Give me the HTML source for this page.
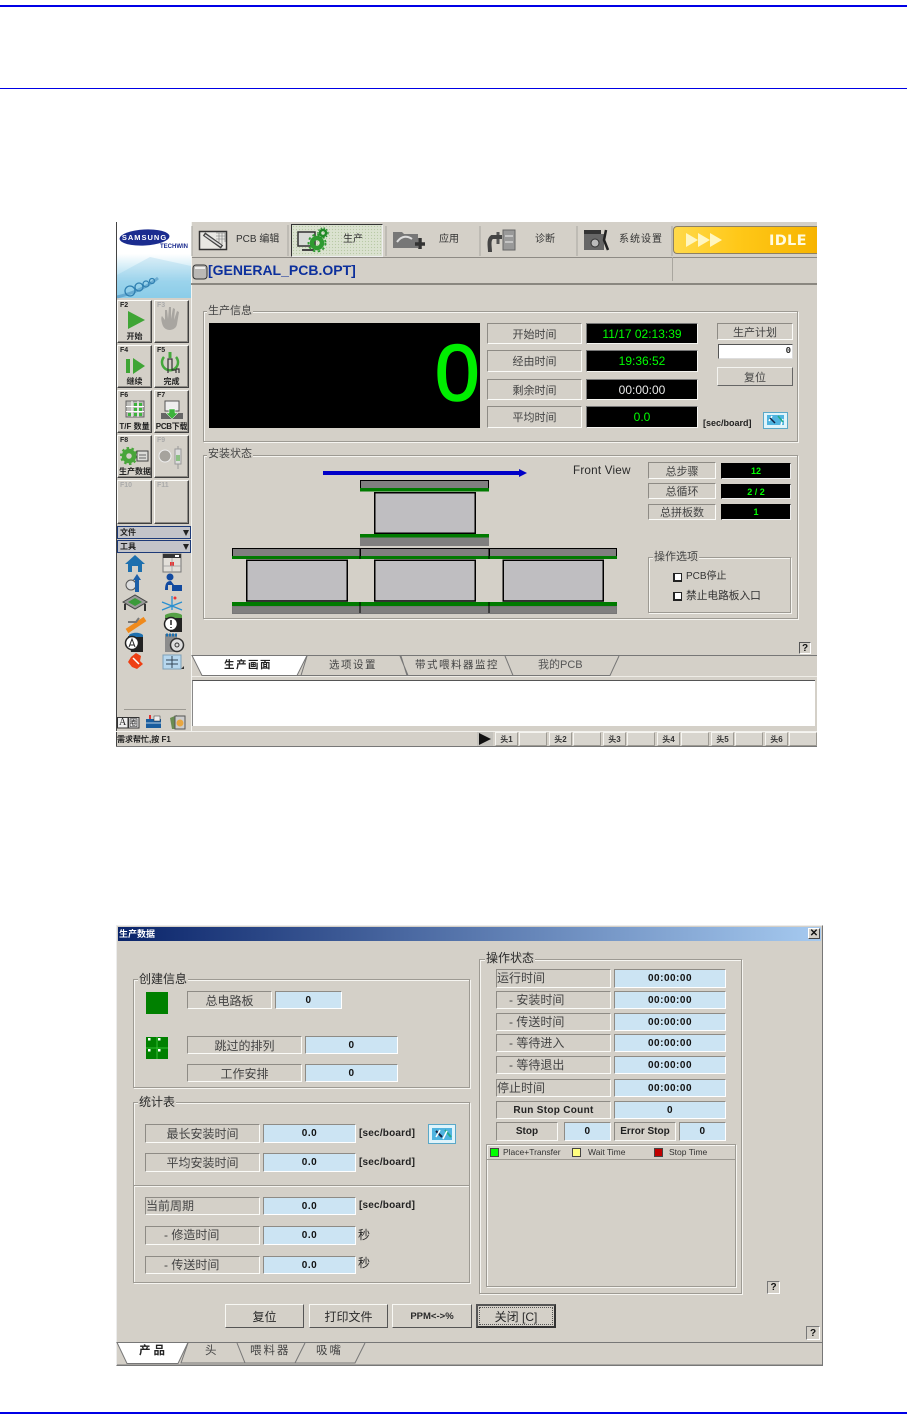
<!DOCTYPE html>
<html lang="zh"><head><meta charset="utf-8"><title>生产数据</title>
<style>
html,body{margin:0;padding:0;background:#fff}
body{position:relative;width:907px;height:1424px;overflow:hidden;font-family:"Liberation Sans","Noto Sans CJK SC",sans-serif;color:#2a2a2a}
div,span{position:absolute;box-sizing:border-box;white-space:nowrap}
.c{display:flex;align-items:center;justify-content:center}
.l{border:1px solid;border-color:#8e8b85 #fbfbf8 #fbfbf8 #8e8b85;font-size:11px;color:#444}
.d{font-size:12px}
.k{background:#000;border:1px solid;border-color:#777 #f4f4f0 #f4f4f0 #777;color:#0f0;font-size:12px}
.v{background:#cce4f3;border:1px solid;border-color:#8e8b85 #fff #fff #8e8b85;font:bold 10px "Liberation Sans",sans-serif;letter-spacing:.5px;color:#111}
.g{border:1px solid #9d9a93;box-shadow:inset 1px 1px 0 #f6f5f1,1px 1px 0 #f6f5f1}
.t{background:#d4d0c8;padding:0 1px;line-height:14px}
.b{background:#d4d0c8;border:1px solid;border-color:#fbfbf8 #3f3f3f #3f3f3f #fbfbf8;box-shadow:inset -1px -1px 0 #8e8b85}
.f{font:bold 7px "Liberation Sans",sans-serif;color:#222}
.n{font-weight:bold;font-size:8px;color:#222;text-align:center;line-height:9px}
.q{background:#d4d0c8;border:1px solid;border-color:#fff #555 #555 #fff;font:bold 10px "Liberation Sans",sans-serif;color:#111}
.s{background:#d8d5ce;border:1px solid;border-color:#f6f5f1 #9d9a93 #9d9a93 #f6f5f1;font-size:8px;font-weight:bold;color:#333}
.m{font-size:10px;color:#333}
.w{font:bold 9px "Liberation Sans",sans-serif;color:#222}
</style></head><body>
<div style="left:0;top:5px;width:907px;height:2px;background:#0000e6"></div>
<div style="left:0;top:88px;width:907px;height:1px;background:#0000e6"></div>
<div style="left:0;top:1412px;width:907px;height:2px;background:#0000e6"></div>

<!-- SCREEN 1 -->
<div style="left:116px;top:222px;width:701px;height:525px;background:#d4d0c8"></div>
<div style="left:116px;top:222px;width:1px;height:525px;background:#444"></div>
<div style="left:117px;top:222px;width:74px;height:76px;background:linear-gradient(180deg,#fff 0,#fff 42%,#d8eff8 58%,#a5d9ef 78%,#8fd0ea 100%)"></div>
<div style="left:191px;top:222px;width:1px;height:509px;background:#f4f4f0"></div>
<div style="left:192px;top:257px;width:625px;height:1px;background:#8e8b85"></div>
<div style="left:191px;top:283px;width:626px;height:2px;background:#8a8780"></div>
<div style="left:672px;top:257px;width:1px;height:24px;background:#a9a69f"></div>
<div style="left:291px;top:224px;width:92px;height:33px;border:1px solid;border-color:#333 #eee #eee #333;background-color:#dbe2d0;background-image:radial-gradient(#b9c9a6 0.7px,transparent 0.8px);background-size:3px 3px"></div>
<div style="left:673px;top:226px;width:144px;height:28px;border:1px solid #8c8064;border-right:0;border-radius:4px 0 0 4px;background:linear-gradient(90deg,#ffd94a,#ffc818 45%,#f7b400)"></div>

<div class="g" style="left:203px;top:311px;width:595px;height:131px"></div>
<div class="g" style="left:203px;top:455px;width:595px;height:164px"></div>
<div class="g" style="left:648px;top:557px;width:143px;height:56px"></div>
<div style="left:209px;top:323px;width:271px;height:105px;background:#000"></div>
<div style="left:192px;top:680px;width:623px;height:46px;background:#fff;border-top:1px solid #555;border-left:1px solid #888"></div>
<div style="left:116px;top:731px;width:701px;height:1px;background:#f2f1ed"></div>
<div style="left:116px;top:746px;width:701px;height:1px;background:#777"></div>
<div style="left:124px;top:709px;width:62px;height:1px;background:#9d9a93"></div>

<!-- sidebar buttons -->
<div class="b" style="left:117px;top:300px;width:35px;height:43px"></div>
<div class="b" style="left:154px;top:300px;width:35px;height:43px"></div>
<div class="b" style="left:117px;top:345px;width:35px;height:43px"></div>
<div class="b" style="left:154px;top:345px;width:35px;height:43px"></div>
<div class="b" style="left:117px;top:390px;width:35px;height:43px"></div>
<div class="b" style="left:154px;top:390px;width:35px;height:43px"></div>
<div class="b" style="left:117px;top:435px;width:35px;height:43px"></div>
<div class="b" style="left:154px;top:435px;width:35px;height:43px"></div>
<div class="b" style="left:117px;top:480px;width:35px;height:44px"></div>
<div class="b" style="left:154px;top:480px;width:35px;height:44px"></div>
<div style="left:117px;top:526px;width:74px;height:13px;background:#c3c4c9;border:1px solid #1d3a78"></div>
<div style="left:117px;top:540px;width:74px;height:13px;background:#c3c4c9;border:1px solid #1d3a78"></div>

<!-- Labels -->
<div class="l c" style="left:487px;top:323px;width:95px;height:21px">开始时间</div>
<div class="l c" style="left:487px;top:350px;width:95px;height:22px">经由时间</div>
<div class="l c" style="left:487px;top:379px;width:95px;height:21px">剩余时间</div>
<div class="l c" style="left:487px;top:406px;width:95px;height:22px">平均时间</div>
<div class="k c" style="left:586px;top:323px;width:112px;height:21px">11/17 02:13:39</div>
<div class="k c" style="left:586px;top:350px;width:112px;height:22px">19:36:52</div>
<div class="k c" style="left:586px;top:379px;width:112px;height:21px;color:#e8e8e8">00:00:00</div>
<div class="k c" style="left:586px;top:406px;width:112px;height:22px">0.0</div>
<div class="l c" style="left:717px;top:323px;width:76px;height:17px">生产计划</div>
<div style="left:718px;top:344px;width:75px;height:15px;background:#fff;border:1px solid;border-color:#555 #ddd #ddd #555;font:bold 9px 'Liberation Mono',monospace;text-align:right;line-height:13px;padding-right:1px">0</div>
<div class="b c" style="left:717px;top:367px;width:76px;height:19px;font-size:11px;color:#444;box-shadow:none;border-color:#f4f4f0 #666 #666 #f4f4f0">复位</div>
<div class="w" style="left:703px;top:418px">[sec/board]</div>
<div style="left:573px;top:464px;font-size:11.700px;line-height:14px;color:#2a2a2a;letter-spacing:.2px">Front View</div>
<div class="l c" style="left:648px;top:462px;width:68px;height:17px">总步骤</div>
<div class="l c" style="left:648px;top:483px;width:68px;height:16px">总循环</div>
<div class="l c" style="left:648px;top:504px;width:68px;height:16px">总拼板数</div>
<div class="k c" style="left:721px;top:463px;width:70px;height:16px;font-size:9px;font-weight:bold;border-color:#000 #eee #eee #000">12</div>
<div class="k c" style="left:721px;top:484px;width:70px;height:15px;font-size:9px;font-weight:bold;border-color:#000 #eee #eee #000">2 / 2</div>
<div class="k c" style="left:721px;top:504px;width:70px;height:16px;font-size:9px;font-weight:bold;border-color:#000 #eee #eee #000">1</div>
<div class="t" style="left:207px;top:304px;font-size:11px;color:#444">生产信息</div>
<div class="t" style="left:207px;top:447px;font-size:11px;color:#444">安装状态</div>
<div class="t" style="left:653px;top:550px;font-size:11px;color:#444">操作选项</div>
<div style="left:673px;top:573px;width:9px;height:9px;background:#fff;border:1px solid #222;border-width:1px 1px 2px 2px"></div>
<div style="left:673px;top:592px;width:9px;height:9px;background:#fff;border:1px solid #222;border-width:1px 1px 2px 2px"></div>
<div style="left:686px;top:570px;font-size:10px;line-height:14px;color:#333">PCB停止</div>
<div style="left:686px;top:589px;font-size:10.700px;line-height:14px;color:#333">禁止电路板入口</div>
<div class="q c" style="left:799px;top:642px;width:12px;height:12px;border-color:#555 #fff #fff #555">?</div>

<!-- Dialog -->
<div style="left:116px;top:925px;width:707px;height:441px;background:#d4d0c8;border:1px solid;border-color:#ececec #777 #777 #ececec"></div>
<div style="left:118px;top:927px;width:703px;height:14px;background:linear-gradient(90deg,#0a246a,#a6caf0)"></div>
<div class="q c" style="left:808px;top:928px;width:12px;height:11px;font-size:10px;border-color:#fff #444 #444 #fff">✕</div>
<div style="left:119px;top:927px;font-size:9px;font-weight:bold;line-height:14px;color:#fff">生产数据</div>
<div class="g" style="left:133px;top:979px;width:337px;height:109px"></div>
<div class="g" style="left:133px;top:1102px;width:337px;height:181px"></div>
<div style="left:134px;top:1185px;width:335px;height:1px;background:#9d9a93;box-shadow:0 1px 0 #f6f5f1"></div>
<div class="g" style="left:479px;top:959px;width:263px;height:335px"></div>
<div class="g" style="left:486px;top:1144px;width:250px;height:143px"></div>
<div style="left:487px;top:1159px;width:248px;height:1px;background:#9d9a93"></div>
<div class="t d" style="left:138px;top:972px">创建信息</div>
<div class="t d" style="left:138px;top:1095px">统计表</div>
<div class="t d" style="left:485px;top:951px">操作状态</div>
<div style="left:146px;top:992px;width:22px;height:22px;background:#008000"></div>
<div style="left:146px;top:1037px;width:22px;height:22px;background:#008000"></div>

<div class="l d c" style="left:187px;top:991px;width:85px;height:18px">总电路板</div>
<div class="v c" style="left:275px;top:991px;width:67px;height:18px">0</div>
<div class="l d c" style="left:187px;top:1036px;width:115px;height:18px">跳过的排列</div>
<div class="v c" style="left:305px;top:1036px;width:93px;height:18px">0</div>
<div class="l d c" style="left:187px;top:1064px;width:115px;height:18px">工作安排</div>
<div class="v c" style="left:305px;top:1064px;width:93px;height:18px">0</div>

<div class="l d c" style="left:145px;top:1124px;width:115px;height:19px">最长安装时间</div>
<div class="v c" style="left:263px;top:1124px;width:93px;height:19px">0.0</div>
<div class="l d c" style="left:145px;top:1153px;width:115px;height:19px">平均安装时间</div>
<div class="v c" style="left:263px;top:1153px;width:93px;height:19px">0.0</div>
<div class="l d" style="left:145px;top:1197px;width:115px;height:18px;line-height:16px">当前周期</div>
<div class="v c" style="left:263px;top:1197px;width:93px;height:18px">0.0</div>
<div class="l d" style="left:145px;top:1226px;width:115px;height:19px;line-height:17px;padding-left:18px">- 修造时间</div>
<div class="v c" style="left:263px;top:1226px;width:93px;height:19px">0.0</div>
<div class="l d" style="left:145px;top:1256px;width:115px;height:18px;line-height:16px;padding-left:18px">- 传送时间</div>
<div class="v c" style="left:263px;top:1256px;width:93px;height:18px">0.0</div>
<div class="w" style="left:359px;top:1128px;font-size:10px;letter-spacing:.2px">[sec/board]</div>
<div class="w" style="left:359px;top:1157px;font-size:10px;letter-spacing:.2px">[sec/board]</div>
<div class="w" style="left:359px;top:1200px;font-size:10px;letter-spacing:.2px">[sec/board]</div>
<div class="d" style="left:358px;top:1228px;line-height:14px">秒</div>
<div class="d" style="left:358px;top:1256px;line-height:14px">秒</div>

<div class="l d" style="left:496px;top:969px;width:115px;height:19px;line-height:17px">运行时间</div>
<div class="v c" style="left:614px;top:969px;width:112px;height:19px">00:00:00</div>
<div class="l d" style="left:496px;top:991px;width:115px;height:18px;line-height:16px;padding-left:12px">- 安装时间</div>
<div class="v c" style="left:614px;top:991px;width:112px;height:18px">00:00:00</div>
<div class="l d" style="left:496px;top:1013px;width:115px;height:18px;line-height:16px;padding-left:12px">- 传送时间</div>
<div class="v c" style="left:614px;top:1013px;width:112px;height:18px">00:00:00</div>
<div class="l d" style="left:496px;top:1034px;width:115px;height:18px;line-height:16px;padding-left:12px">- 等待进入</div>
<div class="v c" style="left:614px;top:1034px;width:112px;height:18px">00:00:00</div>
<div class="l d" style="left:496px;top:1056px;width:115px;height:18px;line-height:16px;padding-left:12px">- 等待退出</div>
<div class="v c" style="left:614px;top:1056px;width:112px;height:18px">00:00:00</div>
<div class="l d" style="left:496px;top:1079px;width:115px;height:18px;line-height:16px">停止时间</div>
<div class="v c" style="left:614px;top:1079px;width:112px;height:18px">00:00:00</div>
<div class="l c" style="left:496px;top:1101px;width:115px;height:18px;font:bold 10px 'Liberation Sans',sans-serif;letter-spacing:.3px;color:#222">Run Stop Count</div>
<div class="v c" style="left:614px;top:1101px;width:112px;height:18px">0</div>
<div class="l c" style="left:496px;top:1122px;width:62px;height:19px;font:bold 10px 'Liberation Sans',sans-serif;color:#222">Stop</div>
<div class="v c" style="left:564px;top:1122px;width:47px;height:19px">0</div>
<div class="l c" style="left:614px;top:1122px;width:62px;height:19px;font:bold 10px 'Liberation Sans',sans-serif;color:#222">Error Stop</div>
<div class="v c" style="left:679px;top:1122px;width:47px;height:19px">0</div>

<div style="left:490px;top:1148px;width:9px;height:9px;background:#0f0;border:1px solid #444"></div>
<div style="left:572px;top:1148px;width:9px;height:9px;background:#ffff80;border:1px solid #444"></div>
<div style="left:654px;top:1148px;width:9px;height:9px;background:#c00000;border:1px solid #444"></div>
<div style="left:503px;top:1147px;font-size:8.500px;line-height:11px;color:#333">Place+Transfer</div>
<div style="left:588px;top:1147px;font-size:8.500px;line-height:11px;color:#333">Wait Time</div>
<div style="left:669px;top:1147px;font-size:8.500px;line-height:11px;color:#333">Stop Time</div>

<div class="b c d" style="left:225px;top:1304px;width:79px;height:24px;box-shadow:none;border-color:#f8f8f4 #555 #555 #f8f8f4">复位</div>
<div class="b c d" style="left:309px;top:1304px;width:79px;height:24px;box-shadow:none;border-color:#f8f8f4 #555 #555 #f8f8f4">打印文件</div>
<div class="b c" style="left:392px;top:1304px;width:80px;height:24px;font:bold 9.500px 'Liberation Sans',sans-serif;box-shadow:none;border-color:#f8f8f4 #555 #555 #f8f8f4">PPM&lt;-&gt;%</div>
<div class="b c d" style="left:476px;top:1304px;width:80px;height:24px;border:2px solid;border-color:#555 #333 #333 #555;box-shadow:none">关闭 [C]<div style="left:1px;top:1px;right:1px;bottom:1px;border:1px dotted #555"></div></div>
<div class="q c" style="left:767px;top:1281px;width:13px;height:13px;border-color:#777 #fff #fff #777">?</div>
<div class="q c" style="left:806px;top:1326px;width:14px;height:14px;border-color:#777 #fff #fff #777">?</div>

<!-- SVG shapes: page coordinates -->
<svg style="position:absolute;left:0;top:0" width="907" height="1424" viewBox="0 0 907 1424" fill="none">
<!-- logo art -->
<path d="M117 275L150 257L191 266V298H117Z" fill="#7ec4e4" opacity=".25"/>
<path d="M117 297C130 294 146 288 158 278" stroke="#3b85b8" stroke-width="3" opacity=".5"/>
<circle cx="152" cy="281" r="2.500" stroke="#2f7fb0" stroke-width="1.200"/><circle cx="146" cy="284" r="3" stroke="#2f7fb0" stroke-width="1.200"/><circle cx="139" cy="287" r="4" stroke="#2f7fb0" stroke-width="1.300"/><circle cx="130" cy="291" r="5" stroke="#2f7fb0" stroke-width="1.300"/>
<ellipse cx="144.500" cy="237.500" rx="25" ry="8" fill="#1b2c8f" transform="rotate(-3 144.500 237.500)"/>
<!-- separators -->
<path d="M192 226V256M288 225V256M386 226V256M480 226V256M577 226V256M672 226V256" stroke="#a9a69f"/>
<!-- pcb icon -->
<rect x="199.500" y="231.500" width="27" height="18" fill="#e9e8e4" stroke="#333" stroke-width="1.500"/>
<path d="M216 233H225V242M219 233V244M222 233V244M216 236H225M216 239H225" stroke="#777" stroke-width=".6"/>
<path d="M204 234L222 247" stroke="#444" stroke-width="4"/><path d="M205 235L221 246" stroke="#ddd" stroke-width="1.500"/>
<!-- production icon -->
<rect x="298" y="232" width="17" height="14" fill="#d8dbd6" stroke="#333" stroke-width="1.500"/><path d="M302 250H314" stroke="#444" stroke-width="2"/>
<circle cx="317" cy="243" r="5" stroke="#2e9a30" stroke-width="4.500"/><circle cx="317" cy="243" r="8.500" stroke="#2e9a30" stroke-width="1.800" stroke-dasharray="2.500 2.500"/>
<circle cx="323" cy="233" r="3" stroke="#1f8a26" stroke-width="2.500"/><circle cx="323" cy="233" r="5" stroke="#1f8a26" stroke-width="1.200" stroke-dasharray="1.500 1.500"/>
<!-- apply icon -->
<path d="M393 232H402L404 234H418V248H393Z" fill="#777"/><path d="M397 242C402 235 408 236 412 239" stroke="#ddd" stroke-width="2"/>
<path d="M420 238V249M415 244H425" stroke="#333" stroke-width="3.500"/>
<!-- diag icon -->
<rect x="503" y="230" width="12" height="20" fill="#999" stroke="#666"/><path d="M505 236H513M505 242H513" stroke="#eee"/>
<path d="M498 232V244" stroke="#555" stroke-width="3"/><path d="M502 237H492C488 240 490 247 490 252" stroke="#444" stroke-width="4"/>
<!-- system icon -->
<rect x="584" y="234" width="20" height="16" fill="#666"/><rect x="584" y="230" width="17" height="4" fill="#333"/><circle cx="595" cy="243" r="4" fill="#bbb" stroke="#333"/><path d="M606 230L604 240L608 250" stroke="#222" stroke-width="2.500"/>
<!-- status arrows -->
<path d="M686 233L698 240L686 247ZM698 233L710 240L698 247ZM710 233L722 240L710 247Z" fill="#fff6c0"/>
<!-- title chip -->
<rect x="193" y="265" width="14" height="14" rx="3" fill="#bab8b5" stroke="#333"/><path d="M195 268H205" stroke="#eeeeec" stroke-width="2"/>
<!-- sidebar -->
<path d="M128 311L145 320L128 329Z" fill="#3fa535"/>
<path d="M163 326C160 318 162 316 162 316L165 320L165 310L167 310L168 319L169 307L171 307L171 319L173 308L175 309L174 320L177 311L179 312L177 324C176 331 166 332 163 326Z" fill="#a8a5a0"/>
<path d="M126 359H130V373H126ZM133 358L145 366L133 374Z" fill="#3fa535"/>
<path d="M164 357A8 8 0 1 0 176 357" stroke="#45a83c" stroke-width="2.500"/>
<path d="M170 352V358" stroke="#45a83c" stroke-width="3"/>
<path d="M168 373V359H172V370H176V373M176 369H179V373" stroke="#333" stroke-width="1.200"/>
<rect x="126" y="401" width="18" height="16" fill="#bcbcb8" stroke="#666"/><path d="M132 401V417M138 401V417M126 406.500H144M126 411.500H144" stroke="#fff"/><path d="M134 403H137V406H134ZM139 403H142V406H139ZM134 408H137V411H134ZM139 408H142V411H139ZM128 413H131V416H128ZM134 413H137V416H134ZM139 413H142V416H139Z" fill="#3cb43c"/>
<rect x="165" y="401" width="14" height="10" fill="#eee" stroke="#555"/>
<path d="M161 419V413H183V419Z" fill="#666"/><path d="M169 409H175V413H178L172 419L166 413H169Z" fill="#3cb43c" stroke="#fff" stroke-width=".5"/>
<circle cx="129" cy="456" r="5" stroke="#48a53a" stroke-width="4.500"/><circle cx="129" cy="456" r="8" stroke="#48a53a" stroke-width="2" stroke-dasharray="2.500 2.500"/>
<rect x="137" y="451" width="11" height="10" fill="#dcdcd8" stroke="#444"/><path d="M139 455H146M139 458H146" stroke="#666"/>
<circle cx="165" cy="456" r="6" fill="#a6a39d" stroke="#eee"/><rect x="175" y="449" width="6" height="15" fill="#ddd" stroke="#999"/><rect x="176" y="455" width="4" height="6" fill="#8cc084"/><path d="M178 446V449M178 464V469" stroke="#999"/>
<path d="M183 530H189L186 536Z" fill="#222"/>
<path d="M183 544H189L186 550Z" fill="#222"/>
<!-- small tool icons -->
<path d="M135 555L145 564H142V572H138V566H132V572H128V564H125Z" fill="#1d6fae"/>
<rect x="163" y="554" width="18" height="18" fill="#e2dfd9" stroke="#777"/><rect x="163" y="554" width="18" height="4" fill="#333"/><rect x="175" y="555" width="4" height="2" fill="#fff"/><rect x="170" y="562" width="4" height="4" fill="#e33"/><path d="M163 566H181M172 558V572" stroke="#999" stroke-width=".7"/>
<circle cx="131" cy="585" r="5" fill="#ddd" stroke="#555"/><path d="M137 574L141 580H139V592H135V580H133Z" fill="#1d5fa8"/>
<circle cx="170" cy="577" r="3.500" fill="#124aa0"/><path d="M165 590C165 583 167 581 171 581L174 585H168V590ZM172 585H182V591H172Z" fill="#124aa0"/>
<path d="M123 602L135 595L147 602L135 609Z" fill="#999" stroke="#444"/><path d="M128 602L135 598L142 602L135 606Z" fill="#3a9a3a"/><path d="M125 604V610M145 604V611" stroke="#333" stroke-width="2"/>
<path d="M172 596V610M162 610L182 602M162 602L182 610" stroke="#2a8fd0" stroke-width="1.300"/><circle cx="175" cy="598" r="1.500" fill="#e33"/>
<path d="M127 631L145 619" stroke="#ef8a1d" stroke-width="5"/><path d="M128 622H136L139 618" stroke="#777" stroke-width="2"/>
<path d="M165 618H182V632H170Z" fill="#222"/><path d="M165 615C170 612 178 612 182 615V618H165Z" fill="#55a044"/><circle cx="171" cy="624" r="6.500" fill="#fff" stroke="#222" stroke-width="1.500"/><path d="M171 620V625M171 627V628" stroke="#222" stroke-width="1.500"/>
<path d="M128 636H143V652H131Z" fill="#222"/><path d="M129 635C132 632 140 632 143 635V637H129Z" fill="#1d6fae"/><circle cx="132" cy="643" r="6.500" fill="#fff" stroke="#222" stroke-width="1.500"/><path d="M129 647L132 639L135 647M130 645H134" stroke="#222"/>
<rect x="165" y="634" width="12" height="18" fill="#8c8c8c"/><path d="M166 635H178" stroke="#1d6fae" stroke-width="3" stroke-dasharray="2 1"/><circle cx="177" cy="645" r="6.500" fill="#ddd" stroke="#333" stroke-width="1.500"/><circle cx="177" cy="645" r="2" stroke="#333"/>
<path d="M136 653L141 656L140 661L143 664L137 669L132 667L128 662L131 657Z" fill="#ee3f14"/><path d="M133 658L139 664" stroke="#fff" stroke-width="1.500"/>
<rect x="163" y="655" width="18" height="14" fill="#b7d7ee" stroke="#7ea0b8"/><path d="M172 656V668M166 660H178M166 664H178" stroke="#345"/>
<path d="M181 669H184V666Z" fill="#333"/>
<rect x="117.500" y="717.500" width="10.500" height="10.500" fill="#eee" stroke="#333"/><rect x="128.500" y="717.500" width="10.500" height="10.500" fill="#eee" stroke="#333"/>
<rect x="146" y="719" width="15" height="9" fill="#1a5d9e"/><rect x="149" y="715" width="2" height="4" fill="#d33"/><rect x="154" y="716" width="6" height="5" fill="#eee" stroke="#333" stroke-width=".5"/><path d="M146 723H161" stroke="#fff" stroke-width=".7"/>
<path d="M170 718L177 715V729H172Z" fill="#6a8c52"/><rect x="175" y="716" width="10" height="13" fill="#ccc" stroke="#555"/><circle cx="180" cy="723" r="3.500" fill="#e8a640"/>
<!-- refresh buttons -->
<rect x="763.500" y="412.500" width="24" height="16" fill="#dff4fb" stroke="#5aa8c8"/><rect x="767" y="415" width="17" height="10" fill="#4fb4e0"/><path d="M772 416L769 421M781 425L783 419" stroke="#fff" stroke-width="1.500"/><path d="M770 418L775 423" stroke="#124" stroke-width="1.500"/><path d="M778 416L783 422" stroke="#2a8" stroke-width="1.500"/>
<rect x="428.500" y="1124.500" width="27" height="19" fill="#dff4fb" stroke="#5aa8c8"/><rect x="432" y="1128" width="20" height="12" fill="#4fb4e0"/><path d="M436 1131L442 1137" stroke="#124" stroke-width="2"/><path d="M445 1130L451 1137" stroke="#2a8" stroke-width="2"/><path d="M436 1137L440 1130M443 1139L447 1131" stroke="#fff" stroke-width="1.500"/>
<!-- arrow -->
<path d="M323 471H519V469L527 473L519 477V475H323Z" fill="#0000c8"/>
<!-- pcb diagram -->
<g stroke="#000" stroke-width="1">
<rect x="360.500" y="480.500" width="128" height="8" fill="#807f7f"/>
<rect x="360.500" y="537.500" width="128" height="8" fill="#807f7f" stroke="#807f7f"/>
<rect x="232.500" y="548.500" width="128" height="8" fill="#807f7f"/><rect x="360.500" y="548.500" width="129" height="8" fill="#807f7f"/><rect x="489.500" y="548.500" width="127" height="8" fill="#807f7f"/>
<rect x="232.500" y="606.500" width="128" height="7" fill="#807f7f" stroke="#777"/><rect x="360.500" y="606.500" width="129" height="7" fill="#807f7f" stroke="#777"/><rect x="489.500" y="606.500" width="127" height="7" fill="#807f7f" stroke="#777"/>
</g>
<path d="M360 488H489V491.500H360ZM360 534H489V537.500H360ZM232 556H617V559H232ZM232 602H617V606H232Z" fill="#007a00"/>
<path d="M360 548V559M489 548V559M360 602V613M489 602V613" stroke="#000"/>
<g fill="#bfbec1" stroke="#000" stroke-width="1.500">
<rect x="374.750" y="492.750" width="100.500" height="40.500"/>
<rect x="246.750" y="560.250" width="100.500" height="40.750"/>
<rect x="374.750" y="560.250" width="100.500" height="40.750"/>
<rect x="503.250" y="560.250" width="100" height="40.750"/>
</g>
<!-- tabs screen 1 -->
<path d="M307 655.500H817" stroke="#777"/>
<path d="M192 676.500H817" stroke="#eeece6"/>
<path d="M307 656L301 675.500H400L407 675.500L401 656M400 656L408 675.500H510L513 675.500L505 656M505 656L513 675.500H610L619 656M297 675.500H301" stroke="#777"/>
<path d="M192 655.500H307L297 675.500H202Z" fill="#fff" stroke="#777"/>
<!-- tabs dialog -->
<path d="M188 1342.500H822M117 1365H822" stroke="#777"/>
<path d="M188 1343L181 1363H245L237 1343M237 1343L245 1363H295L305 1343M295 1363H355L365 1343" stroke="#777"/>
<path d="M117 1342.500H188L178 1363.500H127Z" fill="#fff" stroke="#777"/>
<!-- green panels dots -->
<path d="M157 1037V1059M146 1048H168" stroke="#35c035"/>
<rect x="148" y="1038" width="2.500" height="2.500" fill="#fff"/><rect x="158" y="1038" width="2.500" height="2.500" fill="#fff"/><rect x="148" y="1049" width="2.500" height="2.500" fill="#fff"/><rect x="158" y="1049" width="2.500" height="2.500" fill="#fff"/>
<!-- play -->
<rect x="477" y="732" width="16" height="14" fill="#c5c3bd"/><path d="M479 733L491 739L479 745Z" fill="#111"/>
</svg>

<div style="left:121px;top:233px;width:47px;font:bold 7.500px 'Liberation Sans',sans-serif;letter-spacing:1px;color:#fff;line-height:9px;text-align:center">SAMSUNG</div>
<div style="left:160px;top:243px;font:bold 6px 'Liberation Sans',sans-serif;color:#1b2c8f;line-height:8px">TECHWIN</div>
<div style="left:208px;top:262px;font:bold 14px 'Liberation Sans',sans-serif;line-height:17px;color:#0c2f9c">[GENERAL_PCB.OPT]</div>
<div class="m" style="left:236px;top:233px;line-height:13px">PCB 编辑</div>
<div class="m" style="left:343px;top:233px;line-height:13px">生产</div>
<div class="m" style="left:439px;top:233px;line-height:13px">应用</div>
<div class="m" style="left:535px;top:233px;line-height:13px">诊断</div>
<div class="m" style="left:619px;top:233px;line-height:13px;letter-spacing:1px">系统设置</div>
<div style="left:769px;top:233px;font:bold 14.500px 'DejaVu Sans',sans-serif;line-height:16px;letter-spacing:.3px;color:#fffbe0">IDLE</div>
<div style="left:435px;top:333px;font-size:80px;line-height:80px;color:#00ee00;-webkit-text-stroke:1.500px #00ee00">0</div>

<div class="f" style="left:120px;top:302px">F2</div><div class="f" style="left:157px;top:302px;color:#aaa">F3</div>
<div class="f" style="left:120px;top:347px">F4</div><div class="f" style="left:157px;top:347px">F5</div>
<div class="f" style="left:120px;top:392px">F6</div><div class="f" style="left:157px;top:392px">F7</div>
<div class="f" style="left:120px;top:437px">F8</div><div class="f" style="left:157px;top:437px;color:#aaa">F9</div>
<div class="f" style="left:120px;top:482px;color:#aaa">F10</div><div class="f" style="left:157px;top:482px;color:#aaa">F11</div>
<div class="n" style="left:117px;width:35px;top:332px">开始</div>
<div class="n" style="left:117px;width:35px;top:377px">继续</div>
<div class="n" style="left:154px;width:35px;top:377px">完成</div>
<div class="n" style="left:117px;width:35px;top:422px">T/F 数量</div>
<div class="n" style="left:154px;width:35px;top:422px;letter-spacing:-.3px">PCB下载</div>
<div class="n" style="left:117px;width:36px;top:467px">生产数据</div>
<div class="n" style="left:120px;top:528px">文件</div>
<div class="n" style="left:120px;top:542px">工具</div>
<div style="left:119px;top:717px;font:10px 'Liberation Serif',serif;line-height:11px;color:#222">A</div>
<div style="left:129px;top:718px;font-size:9px;line-height:10px;color:#222">圈</div>
<div style="left:117px;top:734px;font-size:8px;font-weight:bold;line-height:11px;color:#222">需求帮忙,按 F1</div>

<div class="s c" style="left:495px;top:732px;width:23px;height:14px">头1</div>
<div class="s" style="left:519px;top:732px;width:28px;height:14px"></div>
<div class="s c" style="left:549px;top:732px;width:23px;height:14px">头2</div>
<div class="s" style="left:573px;top:732px;width:28px;height:14px"></div>
<div class="s c" style="left:603px;top:732px;width:23px;height:14px">头3</div>
<div class="s" style="left:627px;top:732px;width:28px;height:14px"></div>
<div class="s c" style="left:657px;top:732px;width:23px;height:14px">头4</div>
<div class="s" style="left:681px;top:732px;width:28px;height:14px"></div>
<div class="s c" style="left:711px;top:732px;width:23px;height:14px">头5</div>
<div class="s" style="left:735px;top:732px;width:28px;height:14px"></div>
<div class="s c" style="left:765px;top:732px;width:23px;height:14px">头6</div>
<div class="s" style="left:789px;top:732px;width:28px;height:14px"></div>

<div style="left:224px;top:658px;font-size:10.500px;font-weight:bold;line-height:14px;letter-spacing:1.500px;color:#222">生产画面</div>
<div style="left:329px;top:658px;font-size:10.500px;line-height:14px;letter-spacing:1.500px;color:#444">选项设置</div>
<div style="left:415px;top:658px;font-size:10.500px;line-height:14px;letter-spacing:1.500px;color:#444">带式喂料器监控</div>
<div style="left:538px;top:658px;font-size:11px;line-height:14px;color:#555">我的PCB</div>
<div style="left:139px;top:1344px;font-size:11.500px;font-weight:bold;line-height:14px;letter-spacing:3px;color:#222">产品</div>
<div style="left:205px;top:1344px;font-size:11.500px;line-height:14px;color:#444">头</div>
<div style="left:250px;top:1344px;font-size:11.500px;line-height:14px;letter-spacing:2px;color:#444">喂料器</div>
<div style="left:316px;top:1344px;font-size:11.500px;line-height:14px;letter-spacing:2px;color:#444">吸嘴</div>
</body></html>
